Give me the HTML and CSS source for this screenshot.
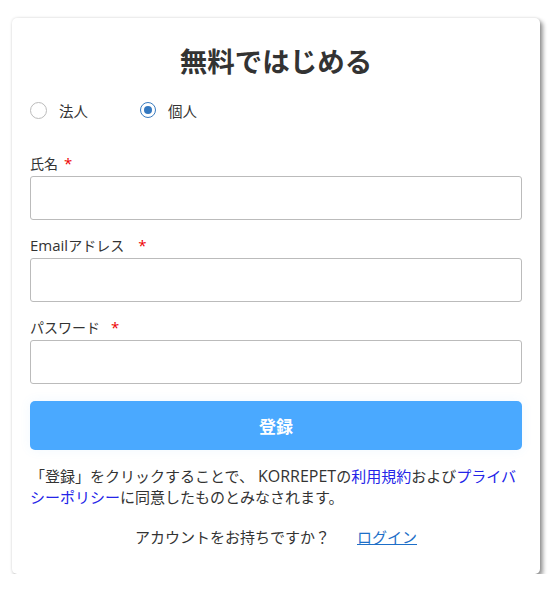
FILE: index.html
```html
<!DOCTYPE html>
<html lang="ja">
<head>
<meta charset="utf-8">
<link rel="stylesheet" href="styles.css">
</head>
<body>
<div class="card">
  <h1 class="title">無料ではじめる</h1>
  <div class="radios">
    <label class="radio"><span class="dot"></span>法人</label>
    <label class="radio"><span class="dot checked"></span>個人</label>
  </div>
  <div class="field first">
    <div class="label">氏名<span class="req">*</span></div>
    <div class="input"></div>
  </div>
  <div class="field">
    <div class="label"><span class="latin-label">Email</span>アドレス<span class="req wide">*</span></div>
    <div class="input"></div>
  </div>
  <div class="field">
    <div class="label">パスワード<span class="req mid">*</span></div>
    <div class="input"></div>
  </div>
  <button class="submit">登録</button>
  <p class="terms">「登録」をクリックすることで、<span class="latin">KORREPET</span>の<a class="blue">利用規約</a>および<a class="blue">プライバシーポリシー</a>に同意したものとみなされます。</p>
  <div class="login">アカウントをお持ちですか？<a class="loginlink">ログイン</a></div>
</div>
</body>
</html>
```

FILE: styles.css
```css
html, body {
  margin: 0;
  padding: 0;
  background: #fff;
}
body {
  font-family: "Open Sans", "Noto Sans CJK JP", sans-serif;
  color: #333;
  font-size: 14px;
}
.card {
  margin: 18px 0 0 12px;
  width: 528px;
  height: 556px;
  box-sizing: border-box;
  background: #fff;
  border-radius: 5px;
  box-shadow: 0 0 3px rgba(0,0,0,0.15), 3px 3px 4px rgba(0,0,0,0.4);
  padding: 24px 18px 0 18px;
  display: flex;
  flex-direction: column;
}
.title {
  margin: 0;
  text-align: center;
  font-size: 27.5px;
  font-weight: 700;
  line-height: 40px;
  color: #333;
}
.radios {
  display: flex;
  margin-top: 18px;
  height: 20px;
  align-items: center;
}
.radio {
  display: flex;
  align-items: center;
  gap: 12px;
  width: 110px;
  font-size: 14.5px;
}
.dot {
  width: 15px;
  height: 15px;
  border: 1px solid #bbb;
  border-radius: 50%;
  box-sizing: content-box;
  background: #fff;
  position: relative;
}
.dot.checked {
  border: 1.5px solid #3a7cc0;
  width: 14px;
  height: 14px;
}
.dot.checked::after {
  content: "";
  position: absolute;
  left: 3px;
  top: 3px;
  width: 8px;
  height: 8px;
  border-radius: 50%;
  background: #3378c0;
}
.field {
  display: flex;
  flex-direction: column;
  margin-top: 16px;
}
.field.first {
  margin-top: 34px;
}
.label {
  font-size: 14px;
  line-height: 20px;
  height: 20px;
  margin-bottom: 2px;
}
.latin-label {
  font-size: 15px;
  line-height: 1;
}
.req {
  color: #e00;
  margin-left: 6px;
  font-size: 15px;
  line-height: 1;
}
.req.mid {
  margin-left: 11px;
}
.req.wide {
  margin-left: 14px;
}
.input {
  height: 44px;
  border: 1px solid #bbb;
  border-radius: 3px;
  box-sizing: border-box;
}
.submit {
  margin-top: 17px;
  height: 49px;
  border: none;
  border-radius: 5px;
  background: #4aa9ff;
  color: #fff;
  font-family: "Open Sans", "Noto Sans CJK JP", sans-serif;
  font-size: 17px;
  font-weight: 700;
  box-shadow: 0 0 12px rgba(74,169,255,0.08);
}
.terms {
  margin: 16px 0 0 0;
  font-size: 15px;
  line-height: 21px;
  color: #333;
}
.latin {
  font-size: 16px;
  line-height: 1;
  margin-left: 4px;
}
.blue {
  color: #2424e8;
}
.login {
  margin-top: 19px;
  text-align: center;
  font-size: 15px;
  line-height: 20px;
}
.loginlink {
  margin-left: 27px;
  color: #1e6fc8;
  text-decoration: underline;
}
```
